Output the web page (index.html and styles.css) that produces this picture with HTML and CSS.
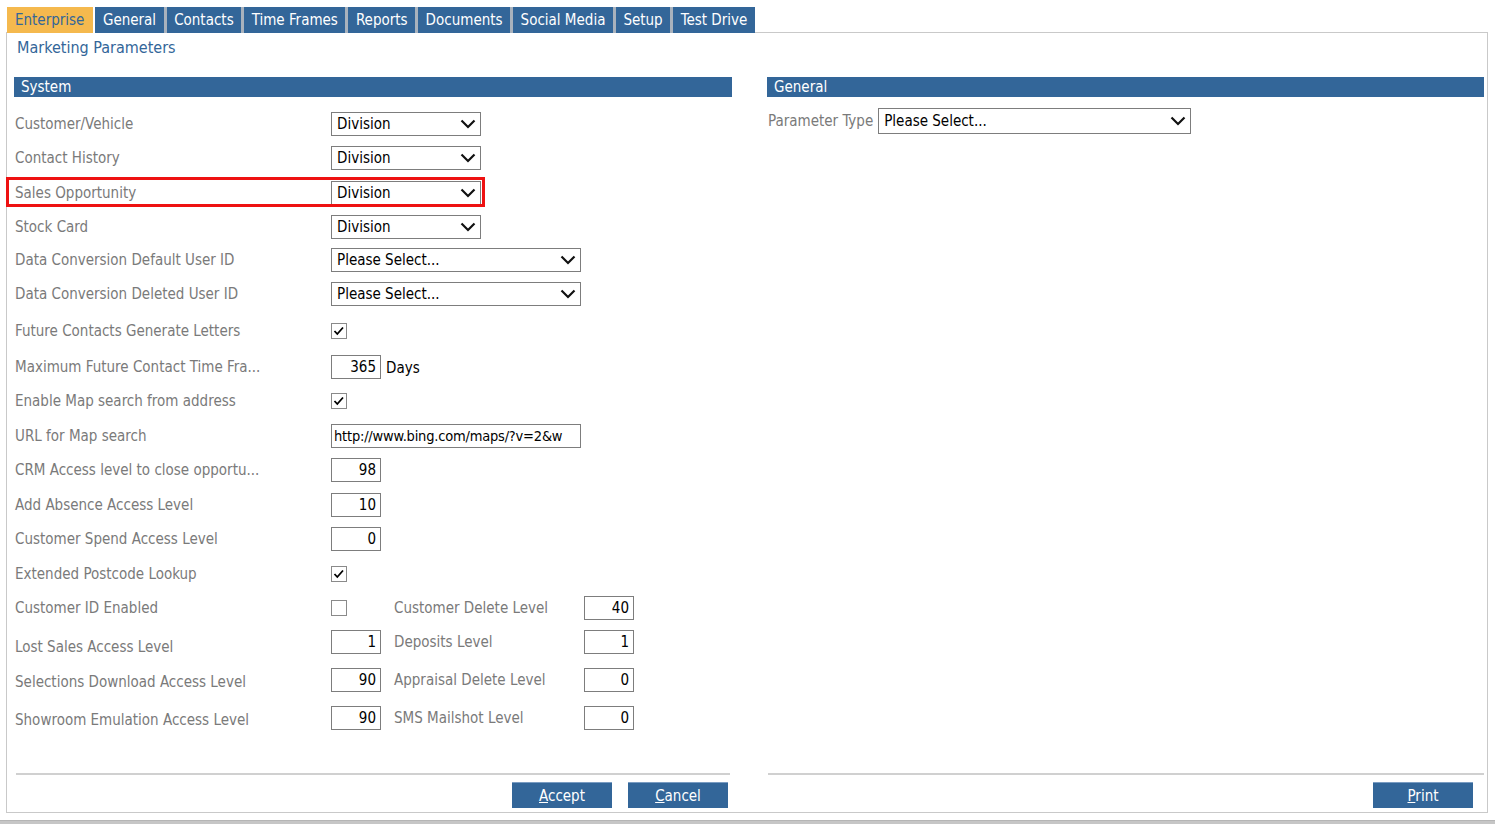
FILE: index.html
```html
<!DOCTYPE html>
<html>
<head>
<meta charset="utf-8">
<link rel="stylesheet" href="styles.css">
</head>
<body>
<nav class="tabs">
  <div class="tab active">Enterprise</div>
  <div class="tab">General</div>
  <div class="tab">Contacts</div>
  <div class="tab">Time Frames</div>
  <div class="tab">Reports</div>
  <div class="tab">Documents</div>
  <div class="tab">Social Media</div>
  <div class="tab">Setup</div>
  <div class="tab">Test Drive</div>
</nav>
<main class="panel">
  <div class="title">Marketing Parameters</div>
  <div class="cols">
    <section class="col col-left">
      <div class="bar">System</div>
      <div class="rows">
        <div class="row h35"><span class="lbl">Customer/Vehicle</span>
          <div class="sel w150"><span>Division</span><svg class="chev" width="16" height="10" viewBox="0 0 16 10"><path d="M1.5 1.5 L8 8 L14.5 1.5" /></svg></div></div>
        <div class="row h34"><span class="lbl">Contact History</span>
          <div class="sel w150"><span>Division</span><svg class="chev" width="16" height="10" viewBox="0 0 16 10"><path d="M1.5 1.5 L8 8 L14.5 1.5" /></svg></div></div>
        <div class="row h35 marked"><span class="lbl">Sales Opportunity</span>
          <div class="sel w150"><span>Division</span><svg class="chev" width="16" height="10" viewBox="0 0 16 10"><path d="M1.5 1.5 L8 8 L14.5 1.5" /></svg></div>
          <div class="highlight"></div></div>
        <div class="row h34"><span class="lbl">Stock Card</span>
          <div class="sel w150"><span>Division</span><svg class="chev" width="16" height="10" viewBox="0 0 16 10"><path d="M1.5 1.5 L8 8 L14.5 1.5" /></svg></div></div>
        <div class="row h31"><span class="lbl">Data Conversion Default User ID</span>
          <div class="sel w250"><span>Please Select...</span><svg class="chev" width="16" height="10" viewBox="0 0 16 10"><path d="M1.5 1.5 L8 8 L14.5 1.5" /></svg></div></div>
        <div class="row h37"><span class="lbl">Data Conversion Deleted User ID</span>
          <div class="sel w250"><span>Please Select...</span><svg class="chev" width="16" height="10" viewBox="0 0 16 10"><path d="M1.5 1.5 L8 8 L14.5 1.5" /></svg></div></div>
        <div class="row h38"><span class="lbl">Future Contacts Generate Letters</span>
          <svg class="cb" width="16" height="16" viewBox="0 0 16 16"><rect x="0.5" y="0.5" width="15" height="15" /><path d="M3.5 8 L6.3 11 L12 4.5" /></svg></div>
        <div class="row h33"><span class="lbl">Maximum Future Contact Time Fra...</span>
          <div class="num">365</div><span class="unit">Days</span></div>
        <div class="row h35"><span class="lbl">Enable Map search from address</span>
          <svg class="cb" width="16" height="16" viewBox="0 0 16 16"><rect x="0.5" y="0.5" width="15" height="15" /><path d="M3.5 8 L6.3 11 L12 4.5" /></svg></div>
        <div class="row h35"><span class="lbl">URL for Map search</span>
          <div class="txt w250">http://www.bing.com/maps/?v=2&amp;w</div></div>
        <div class="row h34"><span class="lbl">CRM Access level to close opportu...</span>
          <div class="num">98</div></div>
        <div class="row h35"><span class="lbl">Add Absence Access Level</span>
          <div class="num">10</div></div>
        <div class="row h34"><span class="lbl">Customer Spend Access Level</span>
          <div class="num">0</div></div>
        <div class="row h35"><span class="lbl">Extended Postcode Lookup</span>
          <svg class="cb" width="16" height="16" viewBox="0 0 16 16"><rect x="0.5" y="0.5" width="15" height="15" /><path d="M3.5 8 L6.3 11 L12 4.5" /></svg></div>
        <div class="row h33"><span class="lbl">Customer ID Enabled</span>
          <div class="cell"><svg class="cb" width="16" height="16" viewBox="0 0 16 16"><rect x="0.5" y="0.5" width="15" height="15" /></svg></div>
          <span class="lbl2">Customer Delete Level</span><div class="num">40</div></div>
        <div class="row h35"><span class="lbl lbl-low">Lost Sales Access Level</span>
          <div class="cell"><div class="num">1</div></div>
          <span class="lbl2">Deposits Level</span><div class="num">1</div></div>
        <div class="row h42"><span class="lbl lbl-low2">Selections Download Access Level</span>
          <div class="cell"><div class="num">90</div></div>
          <span class="lbl2">Appraisal Delete Level</span><div class="num">0</div></div>
        <div class="row h34"><span class="lbl lbl-low2">Showroom Emulation Access Level</span>
          <div class="cell"><div class="num">90</div></div>
          <span class="lbl2">SMS Mailshot Level</span><div class="num">0</div></div>
      </div>
      <div class="foot foot-left">
        <div class="btns">
          <button class="btn"><u>A</u>ccept</button>
          <button class="btn"><u>C</u>ancel</button>
        </div>
      </div>
    </section>
    <section class="col col-right">
      <div class="bar">General</div>
      <div class="param">
        <span class="plbl">Parameter Type</span>
        <div class="sel w313"><span>Please Select...</span><svg class="chev" width="16" height="10" viewBox="0 0 16 10"><path d="M1.5 1.5 L8 8 L14.5 1.5" /></svg></div>
      </div>
      <div class="foot foot-right">
        <div class="btns">
          <button class="btn"><u>P</u>rint</button>
        </div>
      </div>
    </section>
  </div>
</main>
<div class="strip"></div>
</body>
</html>
```

FILE: styles.css
```css
html, body {
  margin: 0;
  padding: 0;
  background: #ffffff;
  overflow: hidden;
}
body {
  font-family: "DejaVu Sans Condensed", "DejaVu Sans", sans-serif;
  font-size: 14px;
  color: #000;
  height: 824px;
}
.tabs {
  display: flex;
  padding: 7px 0 0 7px;
  margin-bottom: -1px;
  position: relative;
  z-index: 1;
}
.tab {
  height: 26px;
  line-height: 26px;
  padding: 0 7.5px;
  background: #336699;
  color: #fff;
  font-size: 15px;
  border-left: 3px solid #a9b2bd;
}
.tab.active {
  background: #f5b94e;
  color: #336699;
  border-left: none;
  padding: 0 9px 0 8px;
}
.tab.active + .tab {
  border-left: 2px solid #ffffff;
}
.panel {
  margin-left: 6px;
  width: 1480px;
  height: 779px;
  border: 1px solid #c9c9c9;
  display: flex;
  flex-direction: column;
  box-sizing: content-box;
}
.title {
  color: #336699;
  font-size: 16px;
  line-height: 20px;
  padding: 5px 0 0 10px;
}
.cols {
  flex: 1;
  display: flex;
  gap: 35px;
  padding: 19px 3px 4px 7px;
}
.col {
  display: flex;
  flex-direction: column;
}
.col-left { width: 718px; }
.col-right { width: 717px; }
.bar {
  height: 20px;
  line-height: 20px;
  background: #336699;
  color: #fff;
  font-size: 15px;
  padding-left: 7px;
}
.rows {
  margin-top: 9px;
  display: flex;
  flex-direction: column;
}
.row {
  display: flex;
  align-items: center;
}
.row.marked { position: relative; }
.h31 { height: 31px; }
.h33 { height: 33px; }
.h34 { height: 34px; }
.h35 { height: 35px; }
.h37 { height: 37px; }
.h38 { height: 38px; }
.h42 { height: 42px; }
.lbl {
  width: 316px;
  padding-left: 1px;
  color: #7a7a7a;
  font-size: 15px;
  white-space: nowrap;
}
.lbl-low { padding-top: 10px; }
.lbl-low2 { padding-top: 4px; }
.cell { width: 63px; display: flex; }
.lbl2 {
  width: 190px;
  color: #7a7a7a;
  font-size: 15px;
  white-space: nowrap;
}
.sel {
  height: 24px;
  box-sizing: border-box;
  border: 1px solid #7d7d7d;
  display: flex;
  align-items: center;
  justify-content: space-between;
  padding: 0 4px 0 5px;
  font-size: 15px;
  background: #fff;
}
.w150 { width: 150px; }
.w250 { width: 250px; }
.w313 { width: 313px; height: 26px; }
.chev path {
  fill: none;
  stroke: #111;
  stroke-width: 2.2;
}
.cb rect {
  fill: #fff;
  stroke: #8a8a8a;
}
.cb path {
  fill: none;
  stroke: #000;
  stroke-width: 1.8;
}
.num {
  width: 50px;
  height: 24px;
  box-sizing: border-box;
  border: 1px solid #7d7d7d;
  text-align: right;
  padding-right: 4px;
  line-height: 22px;
  font-size: 15px;
}
.unit {
  margin-left: 5px;
  font-size: 15px;
  padding-top: 3px;
}
.txt {
  height: 24px;
  box-sizing: border-box;
  border: 1px solid #7d7d7d;
  line-height: 22px;
  padding-left: 2px;
  font-size: 14.5px;
  letter-spacing: -0.2px;
  overflow: hidden;
  white-space: nowrap;
}
.highlight {
  position: absolute;
  left: -8px;
  top: 2px;
  width: 479px;
  height: 30px;
  box-sizing: border-box;
  border: 3px solid #ee1111;
}
.param {
  margin-top: 11px;
  display: flex;
  align-items: center;
  gap: 5px;
  padding-left: 1px;
}
.plbl {
  color: #7a7a7a;
  font-size: 15px;
}
.foot {
  margin-top: auto;
}
.foot-left { margin-left: 2px; margin-right: 2px; }
.foot-right { margin-left: 1px; }
.foot::before {
  content: "";
  display: block;
  border-top: 2px solid #d0d0d0;
}
.btns {
  display: flex;
  justify-content: flex-end;
  gap: 16px;
  padding-top: 7px;
}
.foot-left .btns { padding-right: 2px; }
.foot-right .btns { padding-right: 11px; }
.btn {
  width: 100px;
  height: 26px;
  background: #336699;
  border: none;
  border-top: 1px solid #7a9cc2;
  color: #fff;
  font-family: "DejaVu Sans Condensed", "DejaVu Sans", sans-serif;
  font-size: 15px;
  padding: 0;
}
.strip {
  margin-top: 7px;
  height: 4px;
  background: #c6c6c6;
  border-top: 1px solid #b5b5b5;
}
```
